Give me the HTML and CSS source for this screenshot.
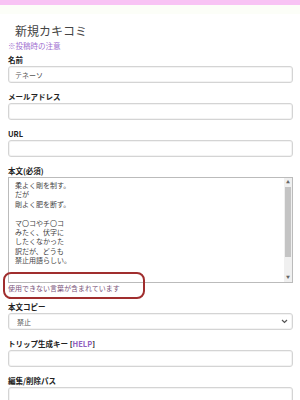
FILE: index.html
```html
<!DOCTYPE html>
<html lang="ja">
<head>
    <meta charset="UTF-8">
    <title>新規カキコミ</title>
    <link rel="stylesheet" href="styles.css">
</head>
<body>
    <div class="topbar"></div>
    <div class="topbar-fade"></div>

    <div class="page">
        <h1 class="title">新規カキコミ</h1>
        <a class="note" href="#">※投稿時の注意</a>

        <form class="post-form">
            <div class="field">
                <label for="name">名前</label>
                <input type="text" id="name" value="テネーソ">
            </div>
            <div class="field">
                <label for="mail">メールアドレス</label>
                <input type="text" id="mail">
            </div>
            <div class="field">
                <label for="url">URL</label>
                <input type="text" id="url">
            </div>
            <div class="field field-body">
                <label for="body">本文(必須)</label>
                <div class="textarea-wrap">
                    <textarea id="body">柔よく剛を制す。
だが
剛よく肥を断ず。

マ〇コやチ〇コ
みたく、伏字に
したくなかった
訳だが、どうも
禁止用語らしい。</textarea>
                    <div class="scrollbar">
                        <span class="scroll-btn">▲</span>
                        <span class="scroll-track"><span class="scroll-thumb"></span></span>
                        <span class="scroll-btn">▼</span>
                    </div>
                </div>
            </div>
            <div class="error-line">
                <p class="error-message">使用できない言葉が含まれています</p>
                <span class="error-mark"></span>
            </div>
            <div class="field">
                <label for="copy">本文コピー</label>
                <div class="select-wrap">
                    <select id="copy">
                        <option>禁止</option>
                        <option>許可</option>
                    </select>
                    <svg class="select-arrow" width="7" height="5" viewBox="0 0 7 5">
                        <path d="M1 1 L3.5 3.5 L6 1" fill="none" stroke="#555" stroke-width="1.2"/>
                    </svg>
                </div>
            </div>
            <div class="field">
                <label for="trip">トリップ生成キー <span class="help">[<a href="#">HELP</a>]</span></label>
                <input type="text" id="trip">
            </div>
            <div class="field">
                <label for="pass">編集/削除パス</label>
                <input type="password" id="pass">
            </div>
        </form>
    </div>
</body>
</html>
```

FILE: styles.css
```css
body {
    margin: 0;
    background: #fff;
    font-family: "Noto Sans CJK JP", "Liberation Sans", sans-serif;
    color: #222;
}
.topbar {
    height: 5px;
    background-color: #f8c3f4; /* ピンクの帯 */
}
.topbar-fade {
    height: 9px;
    background-color: #fcfef8;
}
.page {
    padding: 0 7px 0 8px;
}
.title {
    margin: 9px 0 0;
    padding-left: 7px;
    font-size: 12px;
    line-height: 16px;
    font-weight: normal;
    color: #444;
}
.note {
    display: block;
    margin-top: 1px;
    font-size: 7.5px;
    line-height: 11px;
    color: #a070d0;
    text-decoration: none;
}
.post-form {
    margin-top: 3px;
}
.field {
    margin-bottom: 8px;
}
.field label {
    display: block;
    font-size: 7.5px;
    line-height: 11px;
    font-weight: bold;
    margin-bottom: 1px;
}
.field input,
.field select {
    display: block;
    box-sizing: border-box;
    width: 100%;
    height: 17px;
    margin: 0;
    padding: 0 6px;
    border: 1px solid #d4d4d4;
    border-radius: 3px; /* 入力欄の角丸 */
    box-shadow: inset 0 0 0 1px #f3f3f3;
    background: #fff;
    font-family: inherit;
    font-size: 7px;
    color: #555;
    outline: none;
}
.field-body {
    margin-bottom: 0;
}
.textarea-wrap {
    position: relative;
}
.field textarea {
    display: block;
    box-sizing: border-box;
    width: 100%;
    height: 106px;
    margin: 0;
    padding: 3px 14px 3px 6px;
    border: 1px solid #bbb;
    border-radius: 0;
    font-family: inherit;
    font-size: 7px;
    line-height: 9.4px;
    color: #444;
    resize: none;
    overflow: hidden;
    outline: none;
}
/* 疑似スクロールバー */
.scrollbar {
    position: absolute;
    top: 1px;
    right: 1px;
    bottom: 1px;
    width: 8px;
    display: flex;
    flex-direction: column;
    background: #f0f0f0;
}
.scroll-btn {
    height: 9px;
    font-size: 4px;
    line-height: 9px;
    text-align: center;
    color: #666;
}
.scroll-track {
    flex: 1;
    padding: 0 1px 8px;
}
.scroll-thumb {
    display: block;
    height: 70px;
    background: #c4c4c4;
}
.error-line {
    position: relative;
    margin-bottom: 8px;
}
.error-message {
    margin: 0;
    font-size: 7px;
    line-height: 10px;
    color: #7b557b;
}
.error-mark {
    position: absolute; /* 注釈の赤枠 */
    top: -11px;
    left: -5px;
    width: 142px;
    height: 27px;
    box-sizing: border-box;
    border: 2px solid #a02e2e;
    border-radius: 8px;
}
.select-wrap {
    position: relative;
}
.field select {
    appearance: none;
    padding-left: 8px;
}
.select-arrow {
    position: absolute;
    right: 5px;
    top: 6px;
}
.help {
    font-weight: bold;
}
.help a {
    color: #9060c0;
    text-decoration: none;
}
```
